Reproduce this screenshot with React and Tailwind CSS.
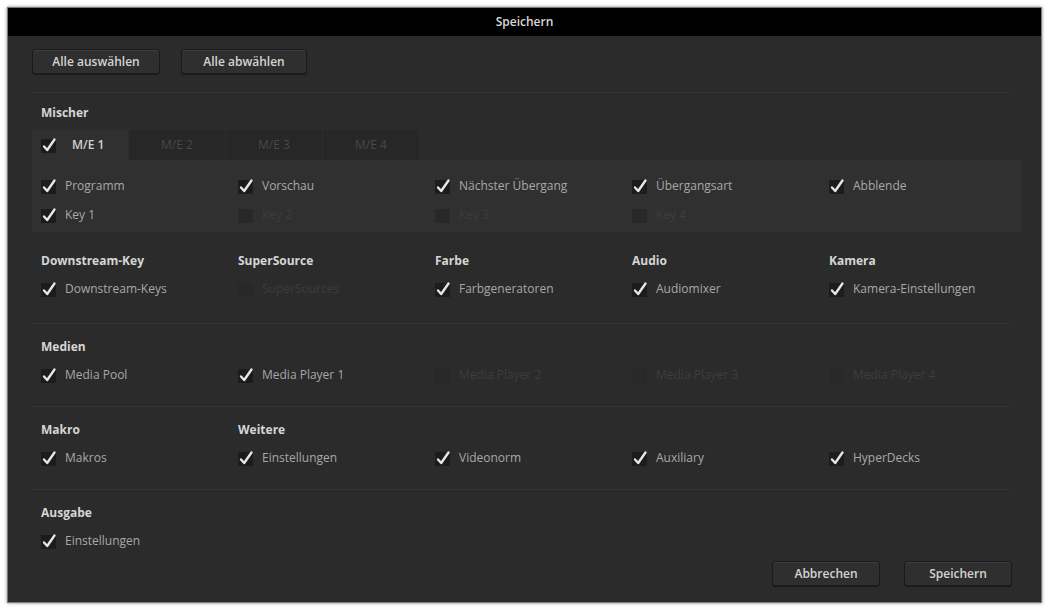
import React from "react";

const FONT = { fontFamily: '"Open Sans", "Liberation Sans", sans-serif' };

// small dark checkbox with a white tick that spills over the top edge
function Check({ on = true }) {
  return (
    <svg width="17" height="16" viewBox="0 0 17 16" className="shrink-0">
      <rect x="0" y="2" width="15" height="14" rx="1" fill={on ? "#1c1c1c" : "#282828"} />
      {on && (
        <path
          d="M3 9.5 L6.2 13 L13.5 2.5"
          fill="none"
          stroke="#e6e6e6"
          strokeWidth="2.4"
          strokeLinecap="round"
          strokeLinejoin="round"
        />
      )}
    </svg>
  );
}

function Item({ label, on = true }) {
  return (
    <div className="flex items-center gap-[7px] h-5">
      <Check on={on} />
      <span className={on ? "text-[12px] text-[#a8a8a8]" : "text-[12px] text-[#3d3d3d]"}>{label}</span>
    </div>
  );
}

function Button({ children, className = "" }) {
  return (
    <button
      className={
        "h-[25px] rounded-[3px] border border-[#1b1b1b] bg-[#2f2f2f] shadow-[inset_0_1px_0_#3c3c3c,0_1px_1px_rgba(0,0,0,0.4)] text-[12px] font-semibold text-[#d4d4d4] " +
        className
      }
    >
      {children}
    </button>
  );
}

function Rule() {
  return <div className="h-px bg-[#363636] mr-3" />;
}

const grid = "grid grid-cols-[197px_197px_197px_197px_197px] pl-[9px]";

function Section({ heads, items, pt = "pt-[13px]", pb = "pb-[21px]" }) {
  return (
    <div className={pt + " " + pb}>
      <div className={grid + " h-5 items-center"}>
        {heads.map((h, i) => (
          <div key={i} className="text-[12px] font-bold text-[#d6d6d6]">{h}</div>
        ))}
      </div>
      <div className={grid + " mt-2"}>
        {items.map((it, i) =>
          it ? <Item key={i} label={it[0]} on={it[1]} /> : <div key={i} />
        )}
      </div>
    </div>
  );
}

export default function App() {
  const tabs = ["M/E 2", "M/E 3", "M/E 4"];
  return (
    <div className="w-[1048px] h-[610px] bg-white p-[7px] pr-[6px]" style={FONT}>
      <div className="h-[596px] w-[1035px] bg-[#2b2b2b] border border-[#7a7a7a] shadow-[0_0_3px_rgba(0,0,0,0.5)] flex flex-col">
        <div className="h-[28px] bg-black flex items-center justify-center text-[12px] font-semibold text-[#d8d8d8]">
          Speichern
        </div>

        <div className="pl-6 pr-[19px] pt-[13px] flex flex-col flex-1">
          <div className="flex gap-[21px]">
            <Button className="w-[128px]">Alle auswählen</Button>
            <Button className="w-[126px]">Alle abwählen</Button>
          </div>
          <div className="mt-[18px]">
            <Rule />
          </div>

          <div className="mt-[10px] pl-[9px] h-5 flex items-center text-[12px] font-bold text-[#d6d6d6]">
            Mischer
          </div>

          {/* M/E tabs */}
          <div className="mt-[7px] flex h-[30px]">
            <div className="w-[96px] bg-[#303030] flex items-center gap-[14px] pl-[9px]">
              <Check />
              <span className="text-[12px] font-semibold text-[#d0d0d0]">M/E 1</span>
            </div>
            {tabs.map((t) => (
              <div
                key={t}
                className="w-[97px] bg-[#272727] border-l border-[#2d2d2d] flex items-center justify-center text-[12px] text-[#474747]"
              >
                {t}
              </div>
            ))}
          </div>
          <div className="bg-[#303030] pt-4 pb-[7px]">
            <div className={grid}>
              <Item label="Programm" />
              <Item label="Vorschau" />
              <Item label="Nächster Übergang" />
              <Item label="Übergangsart" />
              <Item label="Abblende" />
            </div>
            <div className={grid + " mt-[9px]"}>
              <Item label="Key 1" />
              <Item label="Key 2" on={false} />
              <Item label="Key 3" on={false} />
              <Item label="Key 4" on={false} />
            </div>
          </div>

          <Section
            pt="pt-[19px]"
            pb="pb-[24px]"
            heads={["Downstream-Key", "SuperSource", "Farbe", "Audio", "Kamera"]}
            items={[
              ["Downstream-Keys", true],
              ["SuperSources", false],
              ["Farbgeneratoren", true],
              ["Audiomixer", true],
              ["Kamera-Einstellungen", true],
            ]}
          />
          <Rule />
          <Section
            heads={["Medien"]}
            items={[
              ["Media Pool", true],
              ["Media Player 1", true],
              ["Media Player 2", false],
              ["Media Player 3", false],
              ["Media Player 4", false],
            ]}
          />
          <Rule />
          <Section
            heads={["Makro", "Weitere"]}
            items={[
              ["Makros", true],
              ["Einstellungen", true],
              ["Videonorm", true],
              ["Auxiliary", true],
              ["HyperDecks", true],
            ]}
          />
          <Rule />
          <Section pb="pb-0" heads={["Ausgabe"]} items={[["Einstellungen", true]]} />

          <div className="mt-[10px] flex justify-end gap-[24px] pr-[10px]">
            <Button className="w-[108px]">Abbrechen</Button>
            <Button className="w-[108px]">Speichern</Button>
          </div>
        </div>
      </div>
    </div>
  );
}
